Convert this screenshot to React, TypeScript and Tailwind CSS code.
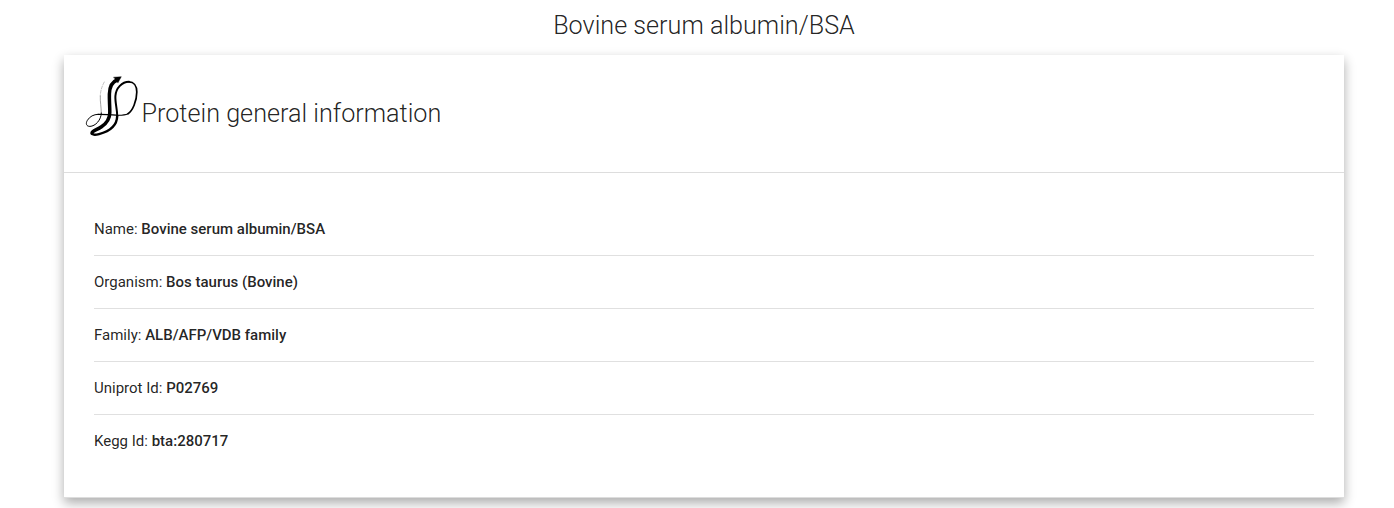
const rows = [
  { label: 'Name', value: 'Bovine serum albumin/BSA' },
  { label: 'Organism', value: 'Bos taurus (Bovine)' },
  { label: 'Family', value: 'ALB/AFP/VDB family' },
  { label: 'Uniprot Id', value: 'P02769' },
  { label: 'Kegg Id', value: 'bta:280717' },
];

function ProteinIcon() {
  return (
    <svg width="56" height="64" viewBox="0 0 56 64" fill="none" stroke="#000" strokeLinecap="round" strokeLinejoin="round" aria-hidden="true">
      <path d="M20.3 8C18 12 16.4 17 16.3 22" strokeWidth=".6" stroke="#999" strokeDasharray="3 1.5" />
      <path d="M16.3 22C16 28 17.3 33 17.3 39" strokeWidth=".7" stroke="#777" />
      <path d="M17.3 39C17.3 46 11.4 52.2 5.9 52.4C2.3 52.4 1.4 49.5 3.4 46.3C5.9 42.3 9.7 40.5 14 40.3" strokeWidth="1" />
      <path d="M14 40.3C19 40.1 25 41 32 41.2C37 41.4 41 41.2 44 39.7" strokeWidth="1.2" />
      <path d="M44 39.7C48.5 37 52.8 27 52.8 18C52.8 11.5 49.5 7.8 45 7.8" strokeWidth="1.7" />
      <path d="M45 7.8C38 7.8 32 14 31.4 22C31 29 33.3 35 33.2 42" strokeWidth="2" />
      <path d="M33.2 42C33 52 24.5 57.6 15 60.1C10.5 61.2 8 60.7 8 59.2" strokeWidth="2.4" />
      <path d="M8 59.2C8 56.5 13 56 17.5 52.8C23 49 25.8 44.5 25.8 38.5C25.8 31 25.2 27 25.4 20C25.6 13.5 27.8 8 33 6" strokeWidth="3.5" />
      <path d="M29.8 3.2L37.3 2.7L34 8.7Z" fill="#000" strokeWidth=".4" />
    </svg>
  );
}

export default function App() {
  return (
    <main className="h-[508px] overflow-hidden bg-white pt-3 pr-[50px] pl-16 font-['Roboto',sans-serif] text-[15px] text-black/87">
      <h1 className="h-[43px] text-center text-[25.2px] leading-7 font-light">Bovine serum albumin/BSA</h1>
      <section className="h-[443px] border-b border-[#dddddd] bg-white shadow-[0_5px_11px_0_rgba(0,0,0,0.33)]">
        <header className="flex h-[118px] items-start border-b border-[#dddddd] pt-[19px] pl-5">
          <ProteinIcon />
          <h2 className="pt-[26px] pl-[1.5px] text-[25.2px] leading-7 font-light">Protein general information</h2>
        </header>
        <dl className="px-[30px] pt-[30px]">
          {rows.map(({ label, value }) => (
            <div key={label} className="flex h-[53px] items-center gap-[3.75px] border-b border-[#e0e0e0] leading-[22.5px] last:border-b-0">
              <dt>{label}:</dt>
              <dd className="font-medium">{value}</dd>
            </div>
          ))}
        </dl>
      </section>
    </main>
  );
}
